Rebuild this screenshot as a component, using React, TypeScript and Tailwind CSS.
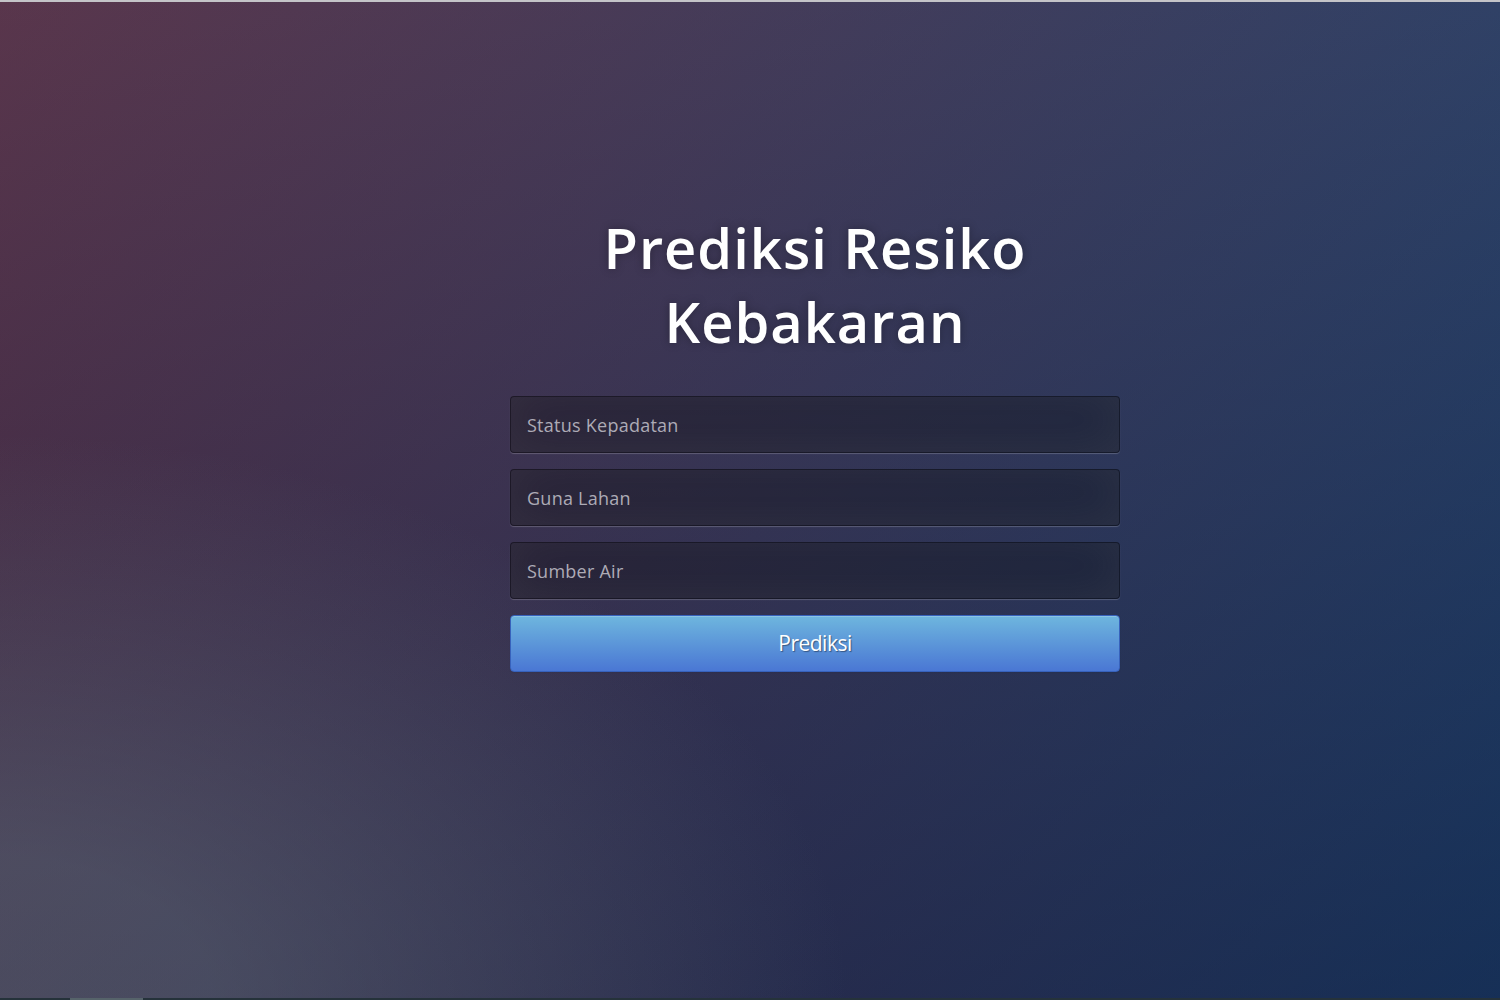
import React from "react";

export default function App() {
  return (
    <div className="h-[1000px] w-[1500px] flex flex-col overflow-hidden" style={{ fontFamily: '"Open Sans", sans-serif' }}>
      <div className="h-[2px] bg-[#c4c4c8]" />
      <div className="flex-1 bg-[image:radial-gradient(ellipse_at_0%_100%,rgba(104,128,138,.4)_10%,rgba(138,114,76,0)_40%),linear-gradient(to_bottom,rgba(57,173,219,.25)_0%,rgba(42,60,87,.4)_100%),linear-gradient(135deg,#640e1c_0%,#092756_100%)]">
        <div className="ml-[510px] w-[610px] pt-[208px]">
          <h1 className="text-center text-white text-[56px] font-semibold leading-[74px] tracking-[1px] [text-shadow:0_0_10px_rgba(0,0,0,0.3)]">
            Prediksi Resiko
            <br />
            Kebakaran
          </h1>
          <form className="mt-[38px] flex flex-col gap-4">
            {["Status Kepadatan", "Guna Lahan", "Sumber Air"].map((p) => (
              <input
                key={p}
                placeholder={p}
                className="h-[57px] w-full rounded-[4px] border border-[rgba(0,0,0,0.3)] bg-[rgba(0,0,0,0.3)] px-4 text-[18px] tracking-[0.25px] text-white placeholder:text-[#adabb6] outline-none shadow-[inset_0_-5px_45px_rgba(100,100,100,0.2),0_1px_1px_rgba(255,255,255,0.2)]"
              />
            ))}
            <button
              type="button"
              className="h-[57px] w-full rounded-[4px] border border-[#3762bc] bg-[linear-gradient(to_bottom,#6eb6de,#4a77d4)] text-[21px] tracking-[-0.5px] text-white [text-shadow:1px_1px_1px_rgba(0,0,0,0.4)] shadow-[inset_0_1px_0_rgba(255,255,255,0.2),0_1px_2px_rgba(0,0,0,0.05)]"
            >
              Prediksi
            </button>
          </form>
        </div>
      </div>
      <div className="h-[2px] bg-[#25323a] flex">
        <div className="ml-[70px] w-[73px] bg-[#56636a]" />
      </div>
    </div>
  );
}
